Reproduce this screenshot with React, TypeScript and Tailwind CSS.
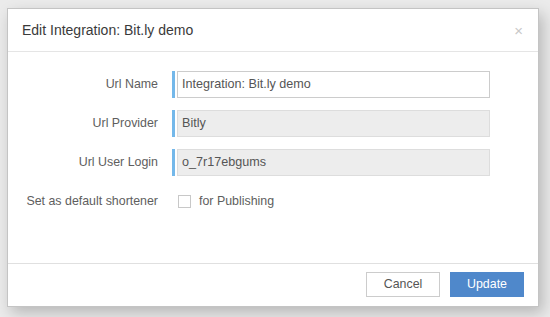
import React from "react";

const font = { fontFamily: '"Liberation Sans", Arial, sans-serif' };

function Row({ label, children }: { label: string; children: React.ReactNode }) {
  return (
    <div className="flex items-center h-[27px]">
      <div className="w-[150px] text-right text-[12.4px] text-[#5e5e5e]">{label}</div>
      <div className="ml-[14px] flex items-stretch h-full">{children}</div>
    </div>
  );
}

function Field({ value, readOnly }: { value: string; readOnly?: boolean }) {
  return (
    <>
      <div className="w-[3px] bg-[#74b8ea]" />
      <div
        className={
          "ml-[2px] w-[313px] border flex items-center px-[4px] text-[12.6px] text-[#555] " +
          (readOnly ? "bg-[#ededed] border-[#dddddd]" : "bg-white border-[#cccccc]")
        }
      >
        {value}
      </div>
    </>
  );
}

export default function App() {
  return (
    <div className="w-[550px] h-[317px] bg-[#ebebeb] pt-[8px] pl-[7px]" style={font}>
      <div className="w-[532px] h-[299px] bg-white border border-[#c4c4c4] shadow-[4px_6px_14px_rgba(0,0,0,0.22)] flex flex-col">
        <div className="h-[43px] border-b border-[#e5e5e5] flex items-center justify-between pl-[14px] pr-[15px]">
          <div className="text-[14px] text-[#3a3a3a]">Edit Integration: Bit.ly demo</div>
          <div className="text-[15px] leading-none text-[#c8c8c8]">×</div>
        </div>
        <div className="flex-1 flex flex-col gap-[12px] pt-[19px]">
          <Row label="Url Name">
            <Field value="Integration: Bit.ly demo" />
          </Row>
          <Row label="Url Provider">
            <Field value="Bitly" readOnly />
          </Row>
          <Row label="Url User Login">
            <Field value="o_7r17ebgums" readOnly />
          </Row>
          <Row label="Set as default shortener">
            <div className="flex items-center">
              <div className="ml-[6px] w-[13px] h-[13px] border border-[#c8c8c8] bg-white" />
              <span className="ml-[8px] text-[12.4px] text-[#5e5e5e]">for Publishing</span>
            </div>
          </Row>
        </div>
        <div className="h-[43px] border-t border-[#e0e0e0] flex items-start justify-end gap-[10px] pr-[14px] pt-[8px]">
          <button className="w-[74px] h-[25px] border border-[#cccccc] bg-white text-[12.4px] text-[#555]">Cancel</button>
          <button className="w-[74px] h-[25px] bg-[#4f88cb] text-[12.4px] text-white">Update</button>
        </div>
      </div>
    </div>
  );
}
